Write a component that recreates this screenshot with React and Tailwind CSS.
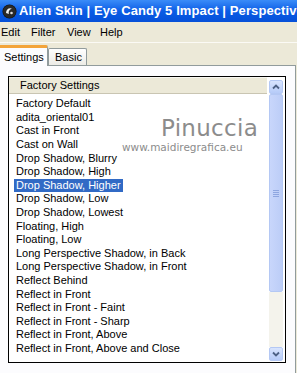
import React from "react";

const presets = [
    "Factory Default",
    "adita_oriental01",
    "Cast in Front",
    "Cast on Wall",
    "Drop Shadow, Blurry",
    "Drop Shadow, High",
    "Drop Shadow, Higher",
    "Drop Shadow, Low",
    "Drop Shadow, Lowest",
    "Floating, High",
    "Floating, Low",
    "Long Perspective Shadow, in Back",
    "Long Perspective Shadow, in Front",
    "Reflect Behind",
    "Reflect in Front",
    "Reflect in Front - Faint",
    "Reflect in Front - Sharp",
    "Reflect in Front, Above",
    "Reflect in Front, Above and Close",
]

function TitleBar() {
    return (
        <div className="h-[22px] flex items-center bg-gradient-to-b from-[#3a8cf8] via-[#0a5ce6] to-[#0650d8] text-white overflow-hidden">
            <svg width="15" height="15" viewBox="0 0 15 15" className="ml-[2px] mr-[2px] shrink-0">
                <circle cx="7.5" cy="7.5" r="7" fill="#111" />
                <circle cx="7.5" cy="7.5" r="6.5" fill="#2a2a2a" />
                <path d="M4 9 C 4 5, 8 3, 10 5 C 8 5, 6 7, 7 10 Z" fill="#f2f2f2" />
                <circle cx="9.5" cy="9" r="1.3" fill="#ddd" />
            </svg>
            <span className="text-[13px] font-bold whitespace-nowrap tracking-[0.1px]">
                Alien Skin | Eye Candy 5 Impact | Perspective
            </span>
        </div>
    )
}

function MenuBar() {
    return (
        <div className="h-[21px] flex items-center bg-[#ece9d8] text-[11px] text-black border-b border-[#fbfaf5]">
            <span className="w-[31px] pl-[1px]">Edit</span>
            <span className="w-[36px]">Filter</span>
            <span className="w-[33px]">View</span>
            <span>Help</span>
        </div>
    )
}

function Tabs() {
    return (
        <div className="h-[22px] flex items-end bg-[#ece9d8] text-[11px] text-black">
            <div className="relative z-10 w-[48px] h-[21px] mb-[-1px] bg-[#fcfcfe] border-t-[3px] border-[#f3a43a] border-r border-r-[#919b9c] flex items-center pl-[4px] rounded-tr-[2px]">
                Settings
            </div>
            <div className="w-[39px] h-[17px] bg-gradient-to-b from-white to-[#ecebe6] border border-b-0 border-[#919b9c] flex items-center pl-[6px] rounded-t-[2px]">
                Basic
            </div>
        </div>
    )
}

function ScrollArrow({ down }) {
    return (
        <div className="h-[14px] w-[14px] rounded-[2px] border border-[#b4c8f4] bg-gradient-to-b from-[#d8e4fe] to-[#b6cbf8] flex items-center justify-center">
            <svg width="8" height="6" viewBox="0 0 8 6">
                <path d={down ? "M1 1.5 L4 4.5 L7 1.5" : "M1 4.5 L4 1.5 L7 4.5"} stroke="#4d6185" strokeWidth="1.8" fill="none" />
            </svg>
        </div>
    )
}

function ScrollBar() {
    return (
        <div className="w-[17px] flex flex-col pt-[3px] pl-[1px] pr-[2px] bg-white">
            <ScrollArrow />
            <div className="h-[198px] w-[14px] rounded-[2px] border border-[#b4c8f4] bg-gradient-to-r from-[#c8d6fb] to-[#bccdf7] flex flex-col items-center justify-center gap-[1px]">
                <div className="w-[6px] h-[1px] bg-[#8ea6e0]" />
                <div className="w-[6px] h-[1px] bg-[#8ea6e0]" />
                <div className="w-[6px] h-[1px] bg-[#8ea6e0]" />
                <div className="w-[6px] h-[1px] bg-[#8ea6e0]" />
            </div>
            <div className="h-[55px] w-[14px] bg-[#f4f3ec]" />
            <ScrollArrow down />
        </div>
    )
}

function PresetList() {
    return (
        <div className="relative h-[287px] border border-black flex overflow-hidden bg-white">
            <div className="flex-1 flex flex-col overflow-hidden">
                <div className="h-[17px] shrink-0 bg-[#ece9d8] border-b border-[#c9c5b2] border-t border-t-[#f7f6f0] flex items-center pl-[11px] text-[11px] mr-[1px]">
                    Factory Settings
                </div>
                <div className="pt-[3px] flex flex-col">
                    {presets.map((p) => (
                        <div key={p} className="h-[13.6px] flex items-center pl-[5px] whitespace-nowrap">
                            <span
                                className={
                                    p === "Drop Shadow, Higher"
                                        ? "px-[2px] bg-[#316ac5] text-white leading-[13px]"
                                        : "px-[2px] leading-[13px]"
                                }
                            >
                                {p}
                            </span>
                        </div>
                    ))}
                </div>
            </div>
            <ScrollBar />
            {/* watermark laid over the list */}
            <span
                className="absolute left-[152px] top-[40px] text-[23px] leading-[22px] tracking-[0.3px] text-[#8c8c8c] pointer-events-none"
                style={{ fontFamily: '"DejaVu Sans", sans-serif' }}
            >
                Pinuccia
            </span>
            <span
                className="absolute left-[113px] top-[65px] text-[10.5px] leading-[11px] text-[#8c8c8c] pointer-events-none"
                style={{ fontFamily: '"DejaVu Sans", sans-serif' }}
            >
                www.maidiregrafica.eu
            </span>
        </div>
    )
}

export default function App() {
    return (
        <div
            className="w-[297px] h-[373px] overflow-hidden flex flex-col bg-[#ece9d8] text-black text-[11px]"
            style={{ fontFamily: '"Liberation Sans", Arial, sans-serif' }}
        >
            <TitleBar />
            <MenuBar />
            <Tabs />
            <div className="flex-1 bg-[#fcfcfe] border-t border-r border-[#919b9c] mr-[1px] pt-[10px] pl-[8px] pr-[9px]">
                <PresetList />
            </div>
        </div>
    )
}
